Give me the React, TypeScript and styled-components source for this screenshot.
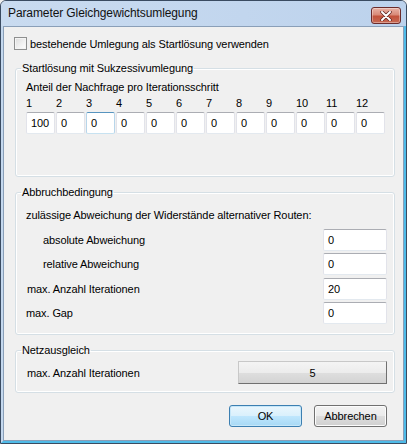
import styled, { createGlobalStyle } from "styled-components"

const GlobalStyle = createGlobalStyle`
    html, body { margin: 0; padding: 0; background: #f0f0f0; }
    * { box-sizing: border-box; }
    body { font-family: "Liberation Sans", Arial, sans-serif; font-size: 11px; letter-spacing: -0.1px; color: #000; }
`

const Window = styled.div`
    width: 407px;
    height: 444px;
    display: flex;
    flex-direction: column;
    border: 1px solid #3a4b61;
    border-radius: 6px 6px 0 0;
    background: linear-gradient(180deg, #cddff3 0%, #bed3ec 100%);
    overflow: hidden;
`
const TitleBar = styled.div`
    height: 25px;
    display: flex;
    align-items: center;
    justify-content: space-between;
    padding: 0 5px 2px 7px;
    background: linear-gradient(90deg, #c9dbf0 0%, #c2d6ee 60%, #bcd2ec 100%);
`
const Title = styled.span`
    font-size: 12px;
    color: #111;
`
const CloseButton = styled.div`
    width: 30px;
    height: 17px;
    margin-top: 6px;
    border: 1px solid #6b2b2b;
    border-radius: 3px;
    display: flex;
    align-items: center;
    justify-content: center;
    background: linear-gradient(180deg, #e8b2a6 0%, #d98a78 45%, #c2523b 55%, #c76a54 100%);
    box-shadow: inset 0 0 0 1px rgba(255, 255, 255, 0.35);
`
const Frame = styled.div`
    flex: 1;
    display: flex;
    border-style: solid;
    border-width: 0 2px 2px 2px;
    border-color: #c4d8ee #4fbbe8 #4fbbe8 #c4d8ee;
`
const Body = styled.div`
    flex: 1;
    background: #f0f0f0;
    border: 1px solid #8a9fb8;
    padding: 10px 8px 0 10px;
    display: flex;
    flex-direction: column;
`
const CheckRow = styled.label`
    display: flex;
    align-items: center;
    gap: 3px;
    height: 13px;
`
const CheckBox = styled.span`
    width: 13px;
    height: 13px;
    border: 1px solid #8e8f8f;
    background: linear-gradient(135deg, #dcdcdc 0%, #f2f2f2 60%, #ffffff 100%);
    box-shadow: inset 0 0 0 1px #f4f4f4;
`
const Group = styled.fieldset<{ $top: number; $bottom: number }>`
    margin: ${p => p.$top}px 0 0 1px;
    padding: 0 7px ${p => p.$bottom}px 10px;
    border: 1px solid #d5dfe5;
    border-radius: 3px;
    box-shadow: inset 0 0 0 1px #fff;
    min-width: 0;
`
const Legend = styled.legend`
    padding: 0 1px;
    margin-left: -5px;
    line-height: 13px;
`
const Text = styled.div`
    line-height: 13px;
`
const StepGrid = styled.div`
    display: grid;
    grid-template-columns: repeat(12, 29px);
    column-gap: 1px;
`
const StepLabel = styled.div`
    line-height: 13px;
    margin-bottom: 2px;
`
const Field = styled.div<{ $focus?: boolean; $right?: boolean; $w?: number }>`
    width: ${p => (p.$w ? p.$w + "px" : "auto")};
    height: 22px;
    background: #fff;
    border: 1px solid;
    border-color: ${p => (p.$focus ? "#5794bf #b7d5ea #c7e2f1 #b7d5ea" : "#abadb3 #e2e3ea #e3e9ef #e2e3ea")};
    border-radius: 2px;
    display: flex;
    align-items: center;
    justify-content: ${p => (p.$right ? "flex-end" : "flex-start")};
    padding: 0 ${p => (p.$right ? 5 : 0)}px 0 4px;
`
const Rows = styled.div`
    display: flex;
    flex-direction: column;
    gap: 2.4px;
    margin-top: 7px;
`
const Row = styled.div<{ $indent?: number }>`
    display: flex;
    align-items: center;
    justify-content: space-between;
    height: 22px;
    padding-left: ${p => p.$indent ?? 0}px;
`
const ValueButton = styled.div`
    width: 149px;
    height: 23px;
    border: 1px solid;
    border-color: #c8c8c8 #707070 #707070 #c8c8c8;
    background: linear-gradient(180deg, #f4f4f4 0%, #ececec 50%, #dedede 52%, #d3d3d3 100%);
    display: flex;
    align-items: center;
    justify-content: center;
`
const Buttons = styled.div`
    display: flex;
    justify-content: flex-end;
    gap: 12px;
    margin: 12px 8px 0 0;
`
const Button = styled.div<{ $default?: boolean }>`
    width: 73px;
    height: 22px;
    border: 1px solid ${p => (p.$default ? "#3c7fb1" : "#707070")};
    border-radius: 3px;
    display: flex;
    align-items: center;
    justify-content: center;
    background: ${p =>
        p.$default
            ? "linear-gradient(180deg, #eaf6fd 0%, #d9f0fc 50%, #bee6fd 52%, #a7d9f5 100%)"
            : "linear-gradient(180deg, #f2f2f2 0%, #ebebeb 50%, #dddddd 52%, #cfcfcf 100%)"};
    box-shadow: inset 0 0 0 1px ${p => (p.$default ? "#c6e7f9" : "#fcfcfc")};
`

const steps = ["100", "0", "0", "0", "0", "0", "0", "0", "0", "0", "0", "0"]

export default function App() {
    return (
        <>
            <GlobalStyle />
            <Window>
                <TitleBar>
                    <Title>Parameter Gleichgewichtsumlegung</Title>
                    <CloseButton>
                        <svg width="12" height="10" viewBox="0 0 12 10">
                            <path d="M2 1 L10 9 M10 1 L2 9" stroke="#5a2020" strokeWidth="3.4" strokeLinecap="round" />
                            <path d="M2 1 L10 9 M10 1 L2 9" stroke="#fff" strokeWidth="2" strokeLinecap="round" />
                        </svg>
                    </CloseButton>
                </TitleBar>
                <Frame>
                    <Body>
                        <CheckRow>
                            <CheckBox />
                            bestehende Umlegung als Startlösung verwenden
                        </CheckRow>

                        <Group $top={12} $bottom={42}>
                            <Legend>Startlösung mit Sukzessivumlegung</Legend>
                            <Text style={{ marginTop: 6, marginBottom: 3 }}>Anteil der Nachfrage pro Iterationsschritt</Text>
                            <StepGrid>
                                {steps.map((_, i) => (
                                    <StepLabel key={"l" + i}>{i + 1}</StepLabel>
                                ))}
                                {steps.map((v, i) => (
                                    <Field key={"f" + i} $right={i === 0} $focus={i === 2}>
                                        {v}
                                    </Field>
                                ))}
                            </StepGrid>
                        </Group>

                        <Group $top={9} $bottom={10}>
                            <Legend>Abbruchbedingung</Legend>
                            <Text style={{ marginTop: 10 }}>zulässige Abweichung der Widerstände alternativer Routen:</Text>
                            <Rows>
                                <Row $indent={17}>
                                    absolute Abweichung
                                    <Field $w={64}>0</Field>
                                </Row>
                                <Row $indent={17}>
                                    relative Abweichung
                                    <Field $w={64}>0</Field>
                                </Row>
                                <Row $indent={1}>
                                    max. Anzahl Iterationen
                                    <Field $w={64}>20</Field>
                                </Row>
                                <Row>
                                    max. Gap
                                    <Field $w={64}>0</Field>
                                </Row>
                            </Rows>
                        </Group>

                        <Group $top={9} $bottom={8}>
                            <Legend>Netzausgleich</Legend>
                            <Row $indent={1} style={{ marginTop: 4, height: 23 }}>
                                max. Anzahl Iterationen
                                <ValueButton>5</ValueButton>
                            </Row>
                        </Group>

                        <Buttons>
                            <Button $default>OK</Button>
                            <Button>Abbrechen</Button>
                        </Buttons>
                    </Body>
                </Frame>
            </Window>
        </>
    )
}
